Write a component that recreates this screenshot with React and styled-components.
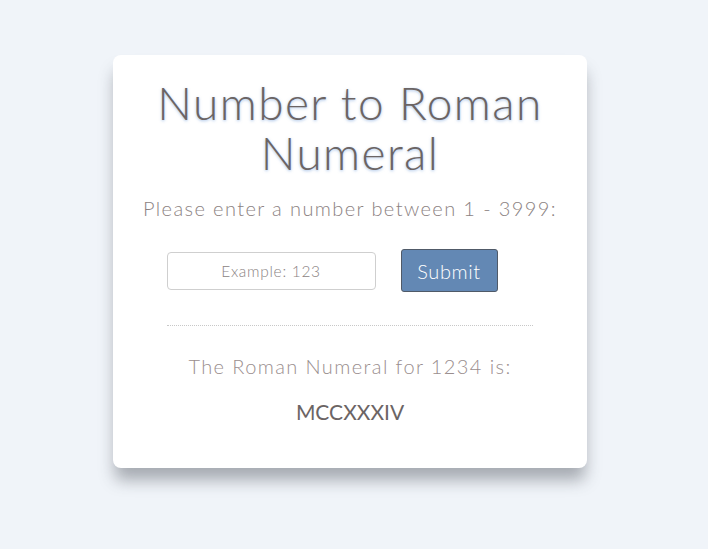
import React, { useState } from "react";
import styled, { createGlobalStyle } from "styled-components";

const GlobalStyle = createGlobalStyle`
  body {
    margin: 0;
    background-color: #f0f4f9;
    font-family: Lato, "Liberation Sans", sans-serif;
  }
`;

const Page = styled.div`
  padding: 55px 0 0 113px;
  min-height: 549px;
  box-sizing: border-box;
`;

const Card = styled.div`
  width: 474px;
  height: 413px;
  box-sizing: border-box;
  background: #ffffff;
  border-radius: 8px;
  box-shadow: 0 14px 16px -2px rgba(55, 60, 70, 0.4);
  padding-top: 23px;
  display: flex;
  flex-direction: column;
  align-items: center;
`;

const Title = styled.h1`
  margin: 0;
  font-size: 46px;
  font-weight: 300;
  line-height: 50px;
  letter-spacing: 1.4px;
  color: #6b6464;
  text-align: center;
  text-shadow: 0 1px 3px rgba(90, 140, 210, 0.55);
`;

const Prompt = styled.p`
  margin: 18px 0 0;
  font-size: 20px;
  font-weight: 300;
  letter-spacing: 1.4px;
  color: #8c8282;
`;

const Form = styled.form`
  display: flex;
  align-items: center;
  gap: 25px;
  margin-top: 29px;
  margin-left: -36px;
`;

const Input = styled.input`
  width: 209px;
  height: 38px;
  box-sizing: border-box;
  border: 1px solid #cfcfcf;
  border-radius: 4px;
  font-family: inherit;
  font-size: 15.5px;
  font-weight: 300;
  text-align: center;
  letter-spacing: 0.7px;
  color: #6b6464;
  outline: none;
  &::placeholder {
    color: #8a8383;
  }
`;

const SubmitButton = styled.button`
  width: 97px;
  height: 43px;
  box-sizing: border-box;
  background: #6388b4;
  border: 1px solid #505a68;
  border-radius: 3px;
  color: #ffffff;
  font-family: inherit;
  font-size: 20px;
  font-weight: 300;
  letter-spacing: 0.6px;
  cursor: pointer;
`;

const Divider = styled.hr`
  width: 366px;
  margin: 33px 0 0;
  border: none;
  border-top: 1px dotted #c8c8c8;
`;

const ResultLabel = styled.p`
  margin: 28px 0 0;
  font-size: 20px;
  font-weight: 300;
  letter-spacing: 1.4px;
  color: #9a8e8e;
`;

const Numeral = styled.p`
  margin: 21px 0 0;
  font-size: 21px;
  font-weight: 400;
  letter-spacing: 0px;
  color: #6b6464;
`;

function toRoman(num) {
  const table = [
    [1000, "M"], [900, "CM"], [500, "D"], [400, "CD"],
    [100, "C"], [90, "XC"], [50, "L"], [40, "XL"],
    [10, "X"], [9, "IX"], [5, "V"], [4, "IV"], [1, "I"],
  ];
  let out = "";
  for (const [value, sym] of table) {
    while (num >= value) {
      out += sym;
      num -= value;
    }
  }
  return out;
}

export default function App() {
  const [value, setValue] = useState("");
  const [number, setNumber] = useState(1234);

  const handleSubmit = (e) => {
    e.preventDefault();
    const n = parseInt(value, 10);
    if (n >= 1 && n <= 3999) setNumber(n);
  };

  return (
    <Page>
      <GlobalStyle />
      <Card>
        <Title>
          Number to Roman
          <br />
          Numeral
        </Title>
        <Prompt>Please enter a number between 1 - 3999:</Prompt>
        <Form onSubmit={handleSubmit}>
          <Input
            type="text"
            placeholder="Example: 123"
            value={value}
            onChange={(e) => setValue(e.target.value)}
          />
          <SubmitButton type="submit">Submit</SubmitButton>
        </Form>
        <Divider />
        <ResultLabel>The Roman Numeral for {number} is:</ResultLabel>
        <Numeral>{toRoman(number)}</Numeral>
      </Card>
    </Page>
  );
}
